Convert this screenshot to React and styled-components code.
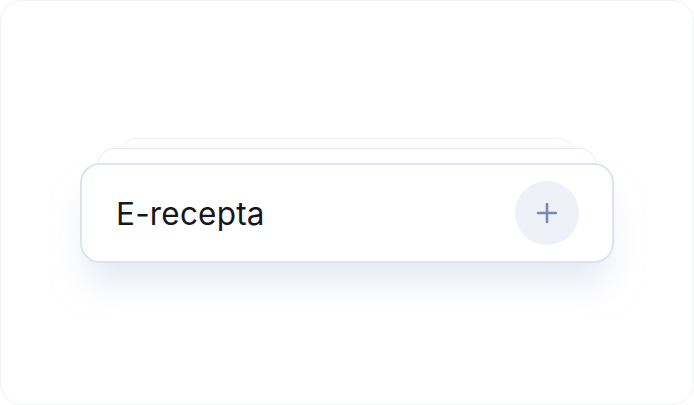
import styled, { createGlobalStyle } from "styled-components"

const Global = createGlobalStyle`
  html, body { margin: 0; padding: 0; background: #ffffff; }
  body { font-family: Inter, "Noto Sans", sans-serif; }
`

const Frame = styled.div`
  box-sizing: border-box;
  width: 694px;
  height: 405px;
  border: 1px solid #f1f2f6;
  border-radius: 22px;
  background: #ffffff;
  display: flex;
  justify-content: center;
  padding-top: 137px;
`

const Stack = styled.div`
  display: flex;
  flex-direction: column;
  align-items: center;
`

const BackCard = styled.div`
  box-sizing: border-box;
  width: ${p => p.$w}px;
  height: 50px;
  margin-bottom: ${p => p.$overlap}px;
  background: #ffffff;
  border: 1.5px solid ${p => p.$line};
  border-radius: 18px;
`

const Card = styled.div`
  box-sizing: border-box;
  width: 534px;
  height: 100px;
  background: #ffffff;
  border: 2px solid #dde4f1;
  border-radius: 20px;
  box-shadow: 0 26px 34px -8px rgba(205, 214, 234, 0.55);
  display: flex;
  align-items: center;
  justify-content: space-between;
  padding: 0 33px 0 34px;
`

const Label = styled.span`
  font-size: 31.5px;
  font-weight: 400;
  color: #15171c;
  letter-spacing: 0.2px;
`

const AddButton = styled.button`
  width: 64px;
  height: 64px;
  border-radius: 50%;
  border: none;
  background: #eef1f7;
  display: flex;
  align-items: center;
  justify-content: center;
  padding: 0;
  cursor: pointer;
`

const App = () => {
  return (
    <>
      <Global />
      <Frame>
        <Stack>
          <BackCard $w={456} $overlap={-40} $line="#edf0f6" />
          <BackCard $w={500} $overlap={-35} $line="#e6eaf3" />
          <Card>
            <Label>E-recepta</Label>
            <AddButton aria-label="add">
              <svg width="22" height="22" viewBox="0 0 22 22">
                <path d="M11 2v18M2 11h18" stroke="#7889b6" strokeWidth="2.6" strokeLinecap="round" />
              </svg>
            </AddButton>
          </Card>
        </Stack>
      </Frame>
    </>
  )
}

export default App
